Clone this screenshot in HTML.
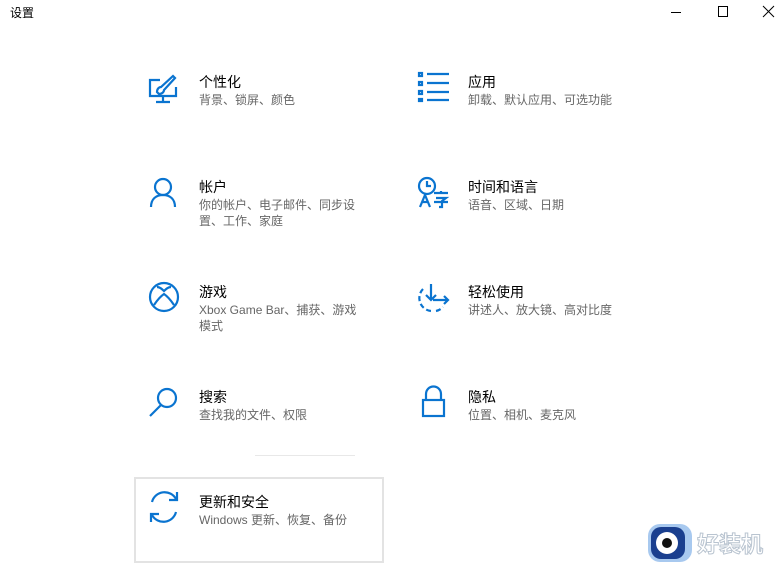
<!DOCTYPE html>
<html><head><meta charset="utf-8"><style>
html,body{margin:0;padding:0;width:784px;height:573px;background:#fff;overflow:hidden;font-family:"Liberation Sans","Noto Sans CJK SC",sans-serif;position:relative}
.a{position:absolute}
.t{font-size:14px;color:#000;line-height:18px;white-space:nowrap}
.s{font-size:12px;color:#666;line-height:16px;white-space:nowrap}
svg{position:absolute;overflow:visible}
svg *{stroke:#0a74d0;fill:none;stroke-width:2.2}
svg.k *{stroke:#000;stroke-width:1}
</style></head><body>
<div class="a" style="left:10px;top:5px;font-size:12px;line-height:16px;color:#000">设置</div>
<div class="a" style="left:671px;top:12px;width:10px;height:1px;background:#000"></div>
<div class="a" style="left:718px;top:6px;width:8px;height:9px;border:1px solid #000"></div>
<svg class="k" style="left:763px;top:6px" width="12" height="12"><path d="M0 0L11 11M11 0L0 11"/></svg>

<svg style="left:148px;top:75px" width="32" height="28"><path d="M12 5H2v16h26V12"/><path d="M15 27v-6M8 27h14"/><path d="M9 17c0-3 2-5 4-5l12-11 2 2-11 12c0 2-2 4-5 4z" stroke-width="2"/></svg>
<div class="a t" style="left:199px;top:73px">个性化</div>
<div class="a s" style="left:199px;top:92px">背景、锁屏、颜色</div>

<svg style="left:418px;top:72px" width="34" height="30"><rect x="1" y="1" width="3" height="3"/><rect x="1" y="10" width="3" height="3"/><rect x="1" y="19" width="3" height="3"/><rect x="1" y="27" width="3" height="2"/><path d="M9 2h22M9 11h22M9 20h22M9 28h22"/></svg>
<div class="a t" style="left:468px;top:73px">应用</div>
<div class="a s" style="left:468px;top:92px">卸载、默认应用、可选功能</div>

<svg style="left:150px;top:178px" width="28" height="30"><circle cx="13" cy="9" r="8"/><path d="M1 29c0-8 5-12 12-12s12 4 12 12"/></svg>
<div class="a t" style="left:199px;top:178px">帐户</div>
<div class="a s" style="left:199px;top:197px">你的帐户、电子邮件、同步设<br>置、工作、家庭</div>

<svg style="left:418px;top:177px" width="32" height="32"><circle cx="9" cy="9" r="8"/><path d="M9 4v5h4"/><path d="M2 30l5-12 5 12M4 25h6" stroke-width="2"/><path d="M16 16h14M23 14v2M18 21h10l-4 3v6h-3M16 25h14" stroke-width="2"/></svg>
<div class="a t" style="left:468px;top:178px">时间和语言</div>
<div class="a s" style="left:468px;top:197px">语音、区域、日期</div>

<svg style="left:148px;top:283px" width="32" height="32"><circle cx="16" cy="14" r="14"/><path d="M6 22c4-6 7-9 10-11 3 2 6 5 10 11" stroke-width="3"/><path d="M9 4c3 0 5 2 7 4 2-2 4-4 7-4" stroke-width="2.5"/></svg>
<div class="a t" style="left:199px;top:283px">游戏</div>
<div class="a s" style="left:199px;top:302px">Xbox Game Bar、捕获、游戏<br>模式</div>

<svg style="left:417px;top:283px" width="34" height="32"><path d="M6 6a13 13 0 0 0 8 22M19 28a13 13 0 0 0 7-4" stroke-dasharray="5 3"/><path d="M14 1v16M9 12l5 5 5-5M16 17h15M27 13l4 4-4 4"/></svg>
<div class="a t" style="left:468px;top:283px">轻松使用</div>
<div class="a s" style="left:468px;top:302px">讲述人、放大镜、高对比度</div>

<svg style="left:149px;top:387px" width="32" height="32"><circle cx="18" cy="11" r="9"/><path d="M12 18L1 29"/></svg>
<div class="a t" style="left:199px;top:388px">搜索</div>
<div class="a s" style="left:199px;top:407px">查找我的文件、权限</div>

<svg style="left:422px;top:385px" width="24" height="32"><path d="M4 15V9a7.5 7.5 0 0 1 15 0v6"/><rect x="1" y="15" width="21" height="16"/></svg>
<div class="a t" style="left:468px;top:388px">隐私</div>
<div class="a s" style="left:468px;top:407px">位置、相机、麦克风</div>

<div class="a" style="left:255px;top:455px;width:100px;height:1px;background:#e8e8e8"></div>
<div class="a" style="left:134px;top:477px;width:246px;height:82px;border:2px solid #e3e3e3"></div>
<svg style="left:148px;top:490px" width="34" height="34"><path d="M4 12a13 13 0 0 1 24-3M28 22a13 13 0 0 1-24 3"/><path d="M29 2v8h-8M3 32v-8h8"/></svg>
<div class="a t" style="left:199px;top:493px">更新和安全</div>
<div class="a s" style="left:199px;top:512px">Windows 更新、恢复、备份</div>

<div class="a" style="left:648px;top:524px;width:44px;height:38px;border-radius:12px;background:#a8c9ef"></div>
<div class="a" style="left:651px;top:527px;width:34px;height:32px;border-radius:10px;background:#1a3f8f"></div>
<div class="a" style="left:656px;top:532px;width:22px;height:22px;border-radius:50%;background:#fff"></div>
<div class="a" style="left:662px;top:538px;width:10px;height:10px;border-radius:50%;background:#111"></div>
<div class="a" style="left:697px;top:532px;font-size:22px;line-height:26px;color:#fff;-webkit-text-stroke:1px #b9c4d0;font-weight:bold">好装机</div>
</body></html>
